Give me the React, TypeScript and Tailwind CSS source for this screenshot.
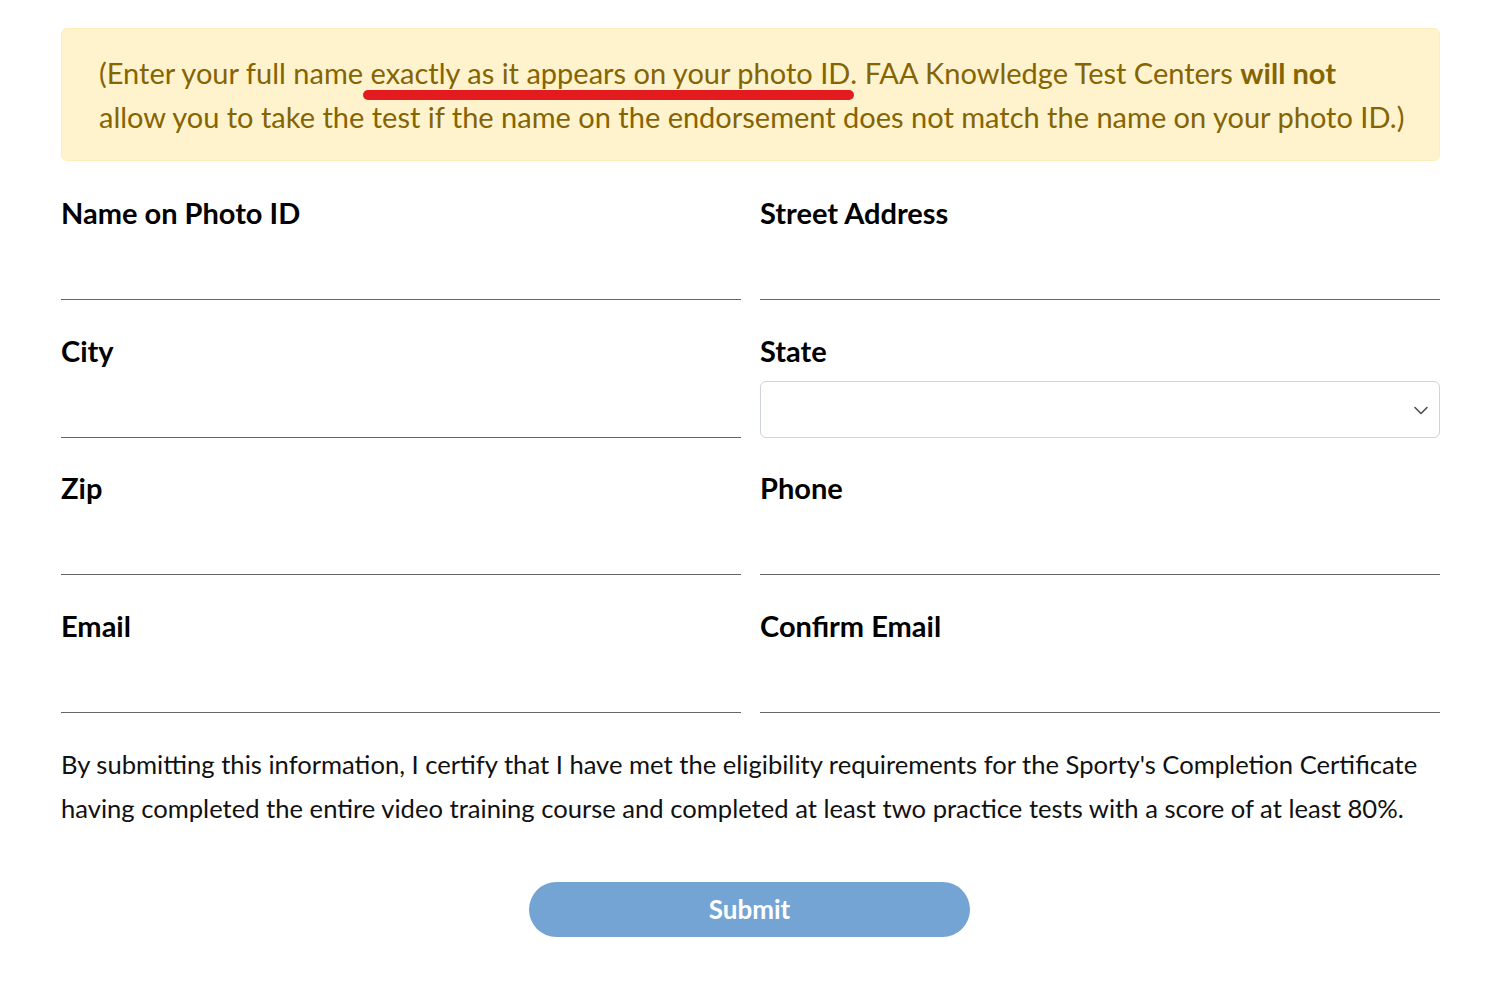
import React from "react";

const font = { fontFamily: "Lato, 'Open Sans', sans-serif" };

function Field({ label, select }: { label: string; select?: boolean }) {
  return (
    <div className="flex flex-col">
      <label className="text-[29px] leading-[34px] font-bold text-black mb-[13px]">{label}</label>
      {select ? (
        <div className="relative h-[57px] rounded-[6px] border border-[#ced4da] bg-white">
          <svg
            className="absolute right-[9px] top-[19px]"
            width="18"
            height="18"
            viewBox="0 0 18 18"
            fill="none"
            stroke="#4a4f55"
            strokeWidth="1.6"
            strokeLinecap="round"
            strokeLinejoin="round"
          >
            <path d="M3 6.5l6 6 6-6" />
          </svg>
        </div>
      ) : (
        <div className="h-[57px] border-b border-[#666]" />
      )}
    </div>
  );
}

export default function App() {
  return (
    <div className="min-h-[981px] bg-white px-[61px] pt-[28px]" style={font}>
      <div className="w-[1379px]">
        <div className="rounded-[6px] border border-[#ffeeba] bg-[#fff3cd] pl-[37px] pr-[20px] pt-[22px] pb-[21px] text-[29px] leading-[44px] text-[#856404]">
          (Enter your full name{" "}
          <span className="relative">
            exactly as it appears on your photo ID
            <span className="absolute left-[-8px] right-[-4px] top-[35px] h-[10px] rounded-full bg-[#e31b1f]" />
          </span>
          . FAA Knowledge Test Centers <b>will not</b>
          <br />
          allow you to take the test if the name on the endorsement does not match the name on your photo ID.)
        </div>
        <div className="mt-[35px] grid grid-cols-2 gap-x-[19px] gap-y-[33.7px]">
          <Field label="Name on Photo ID" />
          <Field label="Street Address" />
          <Field label="City" />
          <Field label="State" select />
          <Field label="Zip" />
          <Field label="Phone" />
          <Field label="Email" />
          <Field label="Confirm Email" />
        </div>
        <p className="mt-[29px] text-[25.6px] leading-[44px] text-[#111]">
          By submitting this information, I certify that I have met the eligibility requirements for the Sporty's Completion
          Certificate having completed the entire video training course and completed at least two practice tests with a
          score of at least 80%.
        </p>
        <div className="mt-[52px] flex justify-center">
          <button className="ml-[-2px] h-[55px] w-[441px] rounded-full bg-[#74a4d3] text-[26px] font-bold text-white">
            Submit
          </button>
        </div>
      </div>
    </div>
  );
}
